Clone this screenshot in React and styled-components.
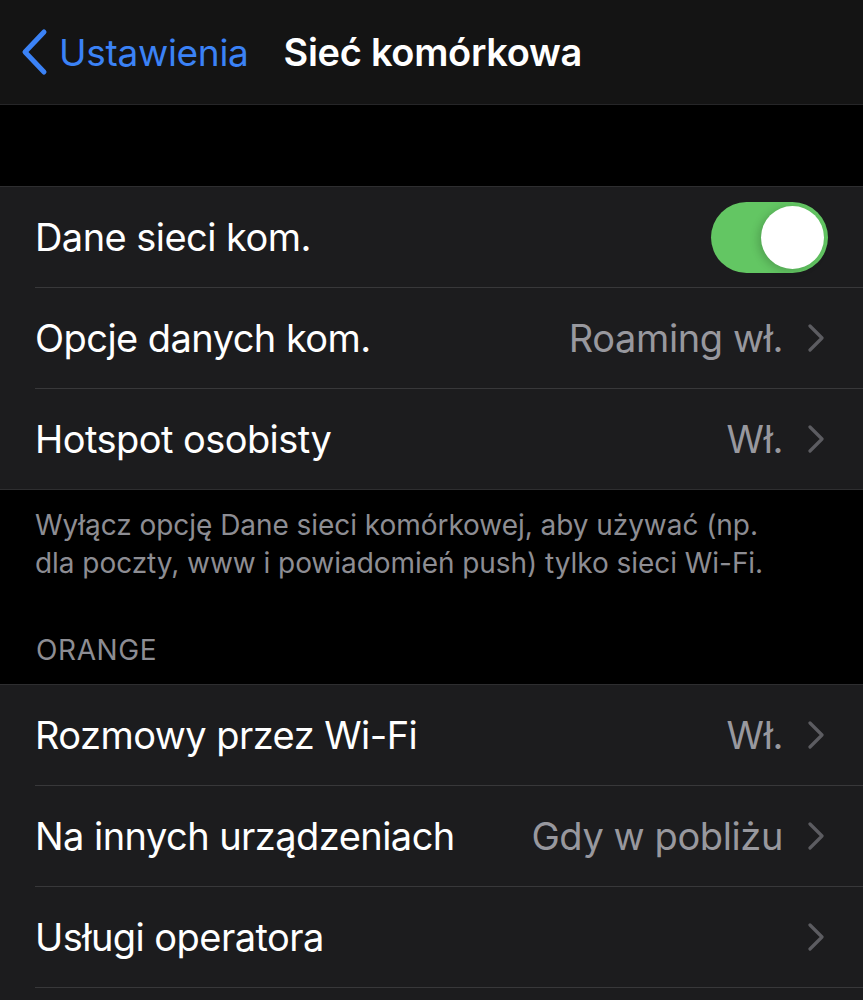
import React from "react";
import styled, { createGlobalStyle } from "styled-components";

const Global = createGlobalStyle`
  html, body { margin: 0; padding: 0; background: #000; }
  body { font-family: "Inter", "Roboto", "Liberation Sans", sans-serif; -webkit-font-smoothing: antialiased; }
  #root { min-height: 100vh; background: #000; }
`;

const Screen = styled.div`
  width: 863px;
  height: 1000px;
  background: #000;
  color: #fff;
  overflow: hidden;
`;

const NavBar = styled.header`
  height: 105px;
  background: #141414;
  border-bottom: 1px solid #262628;
  display: flex;
  align-items: center;
  padding: 0 0 0 20px;
  box-sizing: border-box;
`;

const BackButton = styled.button`
  display: flex;
  align-items: center;
  gap: 11px;
  background: none;
  border: 0;
  padding: 0;
  color: #3b82f6;
  font-family: inherit;
  font-size: 37px;
  letter-spacing: -0.3px;
  cursor: pointer;
`;

const Title = styled.h1`
  margin: 0 0 0 35px;
  font-size: 38px;
  font-weight: 600;
  letter-spacing: -0.3px;
  color: #fff;
`;

const Spacer = styled.div`
  height: ${(p) => p.$h}px;
`;

const Group = styled.section`
  background: #1c1c1e;
  border-top: 1px solid #2e2e30;
  border-bottom: 1px solid #2e2e30;
  padding-bottom: ${(p) => p.$tail || 0}px;
`;

const Row = styled.div`
  height: 100px;
  display: flex;
  align-items: center;
  margin-left: 35px;
  padding-right: 38px;
  border-top: ${(p) => (p.$first ? "none" : "1px solid #38383a")};
  border-bottom: ${(p) => (p.$last ? "1px solid #38383a" : "none")};
`;

const Label = styled.span`
  flex: 1;
  font-size: 38px;
  letter-spacing: -0.55px;
  color: #fff;
`;

const Value = styled.span`
  font-size: 38px;
  letter-spacing: -0.4px;
  color: #98989e;
  margin-right: 24px;
`;

const Chevron = styled.svg`
  width: 18px;
  height: 28px;
  flex: none;
`;

const Toggle = styled.div`
  width: 117px;
  height: 71px;
  border-radius: 36px;
  background: #63c663;
  display: flex;
  align-items: center;
  justify-content: flex-end;
  padding: 0 4px;
  box-sizing: border-box;
  margin-right: -3px;
`;

const Knob = styled.div`
  width: 63px;
  height: 63px;
  border-radius: 50%;
  background: #fff;
  box-shadow: -3px 2px 8px rgba(0, 0, 0, 0.18);
`;

const Footer = styled.p`
  margin: 0;
  padding: 16px 35px 0;
  font-size: 28px;
  line-height: 38px;
  letter-spacing: -0.05px;
  color: #8d8d93;
`;

const SectionHeader = styled.h2`
  margin: 52px 0 0;
  padding: 0 36px 18px;
  font-size: 28px;
  line-height: 32px;
  font-weight: 400;
  letter-spacing: 0.6px;
  color: #8d8d93;
`;

const ChevronIcon = () => (
  <Chevron viewBox="0 0 18 28">
    <path d="M3 2 L15 14 L3 26" fill="none" stroke="#5c5c61" strokeWidth="3.2" strokeLinecap="round" strokeLinejoin="round" />
  </Chevron>
);

const BackIcon = () => (
  <svg width="28" height="48" viewBox="0 0 28 48">
    <path d="M24 4 L5 24 L24 44" fill="none" stroke="#3b82f6" strokeWidth="5" strokeLinecap="round" strokeLinejoin="round" />
  </svg>
);

const NavRow = ({ label, value, first, last }) => (
  <Row $first={first} $last={last}>
    <Label>{label}</Label>
    {value && <Value>{value}</Value>}
    <ChevronIcon />
  </Row>
);

export default function App() {
  return (
    <Screen>
      <Global />
      <NavBar>
        <BackButton>
          <BackIcon />
          Ustawienia
        </BackButton>
        <Title>Sieć komórkowa</Title>
      </NavBar>
      <Spacer $h={81} />
      <Group>
        <Row $first>
          <Label>Dane sieci kom.</Label>
          <Toggle>
            <Knob />
          </Toggle>
        </Row>
        <NavRow label="Opcje danych kom." value="Roaming wł." />
        <NavRow label="Hotspot osobisty" value="Wł." />
      </Group>
      <Footer>
        Wyłącz opcję Dane sieci komórkowej, aby używać (np.
        <br />
        dla poczty, www i powiadomień push) tylko sieci Wi-Fi.
      </Footer>
      <SectionHeader>ORANGE</SectionHeader>
      <Group $tail={40}>
        <NavRow first label="Rozmowy przez Wi-Fi" value="Wł." />
        <NavRow label="Na innych urządzeniach" value="Gdy w pobliżu" />
        <NavRow last label="Usługi operatora" />
      </Group>
    </Screen>
  );
}
